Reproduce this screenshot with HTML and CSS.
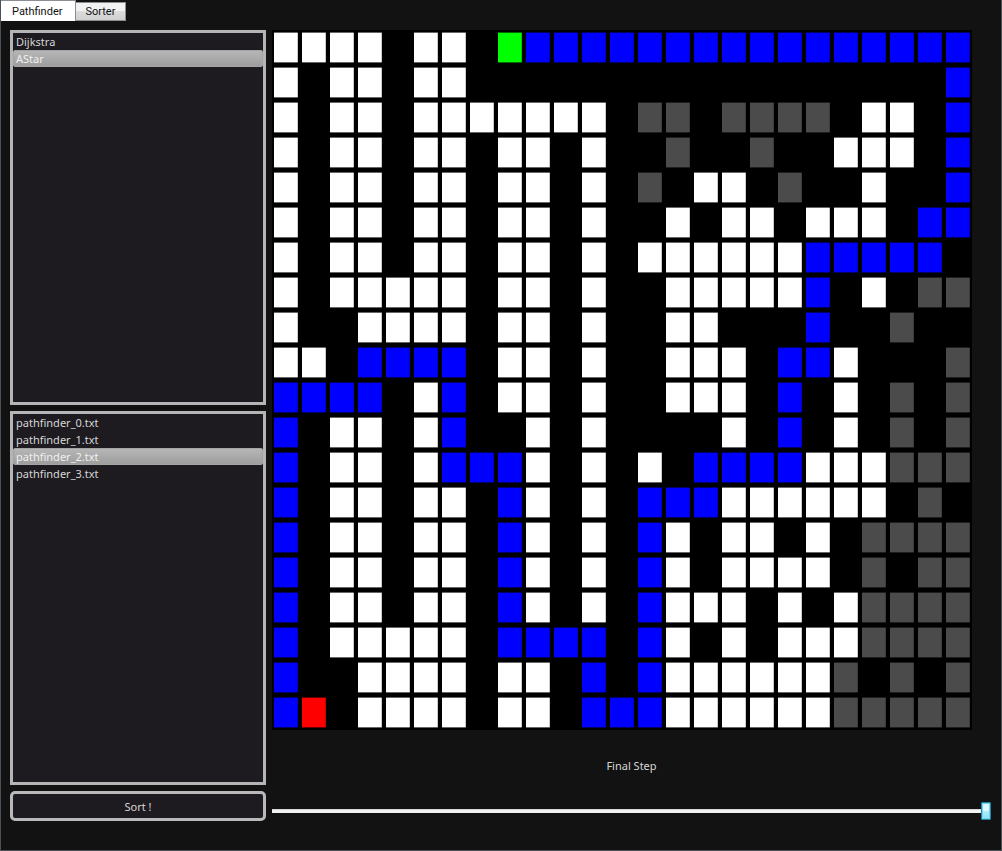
FILE: index.html
```html
<!DOCTYPE html>
<html lang="en">
<head>
<meta charset="utf-8">
<title>Pathfinder</title>
<link rel="stylesheet" href="styles.css">
</head>
<body>
<div class="window">
  <nav class="tabs" role="tablist">
    <button class="tab tab-active" type="button" role="tab" aria-selected="true">Pathfinder</button>
    <button class="tab" type="button" role="tab" aria-selected="false">Sorter</button>
  </nav>
  <main class="content">
    <section class="sidebar">
      <ul class="list" aria-label="Algorithm">
        <li><button class="item" type="button">Dijkstra</button></li>
        <li><button class="item item-selected" type="button">AStar</button></li>
      </ul>
      <ul class="list" aria-label="Maze file">
        <li><button class="item" type="button">pathfinder_0.txt</button></li>
        <li><button class="item" type="button">pathfinder_1.txt</button></li>
        <li><button class="item item-selected" type="button">pathfinder_2.txt</button></li>
        <li><button class="item" type="button">pathfinder_3.txt</button></li>
      </ul>
      <button class="sort" type="button">Sort !</button>
    </section>
    <section class="board">
      <div class="maze" id="maze"></div>
      <label class="step" for="step">Final Step</label>
      <input class="slider" id="step" type="range" min="0" max="100" value="100">
    </section>
  </main>
</div>
<script src="maze.js"></script>
</body>
</html>
```
FILE: styles.css
```css
* {
  box-sizing: border-box;
}

body {
  margin: 0;
  background: #121212;
  color: #d6d6d6;
  font: 11px/17px "Noto Sans", "Open Sans", sans-serif;
}

button {
  margin: 0;
  font: inherit;
  color: inherit;
}

.window {
  display: flex;
  flex-direction: column;
  min-height: 100vh;
  border: solid #4b4f56;
  border-width: 0 1px 1px;
}

.tabs {
  display: flex;
  align-items: flex-end;
  height: 21px;
}

.tab {
  height: 19px;
  padding: 0 10px 0 9px;
  border: 1px solid #8c8e94;
  border-left-width: 0;
  background: linear-gradient(#f2f2f2 50%, #dcdcdc 50%, #d0d0d0);
  color: #111;
  font-family: Roboto, "Liberation Sans", sans-serif;
}

.tab-active {
  height: 21px;
  padding: 0 13px 0 11px;
  border-bottom: 0;
  background: #fff;
}

.content {
  flex: 1;
  display: grid;
  grid-template-columns: 256px 1fr;
  gap: 6px;
  padding: 9px 10px 29px 9px;
}

.sidebar {
  display: flex;
  flex-direction: column;
  gap: 6px;
}

.list {
  flex: 1;
  margin: 0;
  padding: 0;
  border: 3px solid #b5b5b5;
  background: #1d1a20;
  list-style: none;
}

.item {
  display: block;
  width: 100%;
  height: 17px;
  padding: 0 3px;
  border: 0;
  border-radius: 3px;
  background: none;
  line-height: 17px;
  text-align: left;
}

.item-selected {
  background: linear-gradient(#b8b8b8, #9c9c9c);
  box-shadow: inset 0 0 0 1px #a4a4a4;
  color: #f0f0f0;
}

.sort {
  height: 30px;
  border: 3px solid #b9b9b9;
  border-radius: 5px;
  background: #1d1a20;
}

.board {
  display: flex;
  flex-direction: column;
}

.maze {
  display: grid;
  grid-template-columns: repeat(25, 28px);
  grid-auto-rows: 35px;
  align-self: flex-start;
  background: #000;
}

.cell {
  margin: 2px;
  background: #000;
}

.open,
.visited,
.path,
.start,
.goal {
  box-shadow: inset 0 1px rgba(0, 0, 0, 0.6), inset 0 -1px rgba(0, 0, 0, 0.6), inset -1px 0 rgba(0, 0, 0, 0.2);
}

.open {
  background: #fff;
}

.visited {
  background: #4b4b4b;
}

.path {
  background: #00f;
}

.start {
  background: #0f0;
}

.goal {
  background: #f00;
}

.step {
  flex: 1;
  display: flex;
  align-items: center;
  justify-content: center;
}

.slider {
  appearance: none;
  width: 100%;
  height: 20px;
  margin: 0;
  background: linear-gradient(#d6d6d6 1px, #f2f2f2 1px) center / 100% 4px no-repeat;
}

.slider::-webkit-slider-thumb {
  appearance: none;
  width: 10px;
  height: 18px;
  border: 1px solid #2186a8;
  border-radius: 1px;
  background: linear-gradient(#dff8ff 50%, #b0ecfb 50%, #8ee3f8);
  box-shadow: inset 0 0 0 1px #6fd4f0;
}
```
FILE: maze.js
```js
const rows = [
  "wwww.ww.gbbbbbbbbbbbbbbbb",
  "w.ww.ww.................b",
  "w.ww.wwwwwww.kk.kkkk.ww.b",
  "w.ww.ww.ww.w..k..k..www.b",
  "w.ww.ww.ww.w.k.ww.k..w..b",
  "w.ww.ww.ww.w..w.ww.www.bb",
  "w.ww.ww.ww.w.wwwwwwbbbbb.",
  "w.wwwww.ww.w..wwwwwb.w.kk",
  "w..wwww.ww.w..ww...b..k..",
  "ww.bbbb.ww.w..www.bbw...k",
  "bbbb.wb.ww.w..www.b.w.k.k",
  "b.ww.wb..w.w....w.b.w.k.k",
  "b.ww.wbbbw.w.w.bbbbwwwkkk",
  "b.ww.ww.bw.w.bbbwwwwww.k.",
  "b.ww.ww.bw.w.bw.ww.w.kkkk",
  "b.ww.ww.bw.w.bw.wwww.k.kk",
  "b.ww.ww.bw.w.bwww.w.wkkkk",
  "b.wwwww.bbbb.bw.w.wwwkkkk",
  "b..wwww.ww.b.bwwwwwwk.k.k",
  "br.wwww.ww.bbbwwwwwwkkkkk"
];

const kinds = { w: "open", k: "visited", b: "path", g: "start", r: "goal" };
const maze = document.getElementById("maze");

for (const row of rows) {
  for (const mark of row) {
    const cell = document.createElement("div");
    cell.className = "cell " + (kinds[mark] || "");
    maze.append(cell);
  }
}
```
